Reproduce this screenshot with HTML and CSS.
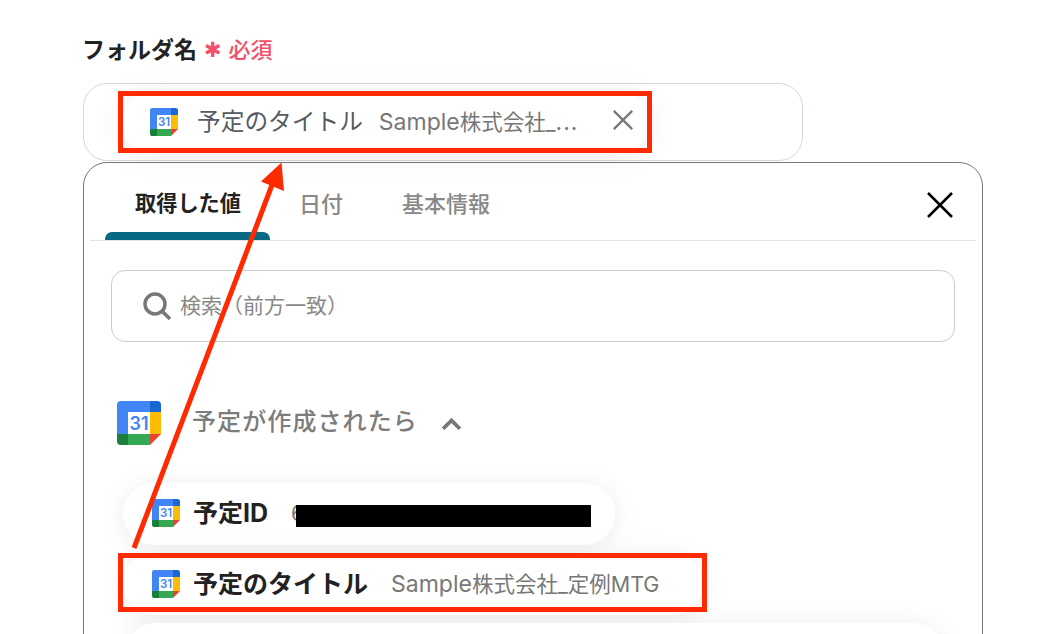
FILE: index.html
```html
<!DOCTYPE html>
<html lang="ja">
<head>
    <meta charset="UTF-8">
    <meta name="viewport" content="width=device-width, initial-scale=1.0">
    <title>フォルダ名</title>
    <link rel="stylesheet" href="styles.css">
</head>
<body>
    <svg class="defs">
        <symbol id="gcal" viewBox="0 0 44 44">
            <path fill="#4285f4" d="M4 0H33V11H11V33H0V4Q0 0 4 0Z"/>
            <path fill="#1967d2" d="M33 0H40Q44 0 44 4V11H33Z"/>
            <rect x="33" y="11" width="11" height="22" fill="#fbbc04"/>
            <rect x="11" y="33" width="22" height="11" fill="#34a853"/>
            <path fill="#188038" d="M0 33H11V44H4Q0 44 0 40Z"/>
            <path fill="#ea4335" d="M33 33H44L33 44Z"/>
            <rect x="11" y="11" width="22" height="22" fill="#fff"/>
            <text x="22" y="28.500" text-anchor="middle" class="gcal-num">31</text>
        </symbol>
    </svg>

    <div class="page">
        <div class="field-label">
            <span>フォルダ名</span>
            <span class="required"><span class="asterisk">✱</span>必須</span>
        </div>

        <div class="field-input">
            <div class="chip marked">
                <svg class="icon-sm"><use href="#gcal"/></svg>
                <span class="chip-name">予定のタイトル</span>
                <span class="chip-value"><span class="latin">Sample</span>株式会社_<span class="dots">...</span></span>
                <svg class="chip-close" viewBox="0 0 24 24"><path d="M2 2L22 22M22 2L2 22"/></svg>
            </div>
        </div>

        <div class="panel">
            <div class="tabs">
                <div class="tab active">取得した値</div>
                <div class="tab">日付</div>
                <div class="tab">基本情報</div>
                <svg class="panel-close" viewBox="0 0 26 26"><path d="M1 1L25 25M25 1L1 25"/></svg>
            </div>

            <div class="search">
                <svg class="search-icon" viewBox="0 0 28 28"><circle cx="12" cy="12" r="10"/><path d="M19.500 19.500L27 27"/></svg>
                <span class="search-text">検索（前方一致）</span>
            </div>

            <div class="section-head">
                <svg class="icon-lg"><use href="#gcal"/></svg>
                <span class="section-title">予定が作成されたら</span>
                <svg class="chevron" viewBox="0 0 20 12"><path d="M2 11L10 3L18 11"/></svg>
            </div>

            <div class="values">
                <div class="value-row first">
                    <svg class="icon-sm"><use href="#gcal"/></svg>
                    <span class="value-name">予定ID</span>
                    <span class="value-text">6</span>
                    <span class="redacted"></span>
                </div>
                <div class="value-row second marked">
                    <svg class="icon-sm"><use href="#gcal"/></svg>
                    <span class="value-name">予定のタイトル</span>
                    <span class="value-text"><span class="latin">Sample</span>株式会社_定例MTG</span>
                </div>
                <div class="value-row third"></div>
            </div>
        </div>
    </div>

    <!-- annotation arrow -->
    <svg class="arrow" viewBox="0 0 1056 634" width="1056" height="634">
        <path class="arrow-line" d="M134 548L272 185"/>
        <path class="arrow-head" d="M281.500 162.500L284 191L261 181.500Z"/>
    </svg>
</body>
</html>
```

FILE: styles.css
```css
* {
    box-sizing: border-box;
}

html, body {
    margin: 0;
    height: 634px;
    overflow: hidden;
    background: white;
}

body {
    font-family: "Inter", "Noto Sans CJK JP", sans-serif;
    color: #222;
    position: relative;
}

.defs {
    display: none;
}

.gcal-num {
    font-family: "Inter", sans-serif;
    font-size: 18px;
    font-weight: 600;
    fill: #4285f4;
}

.page {
    height: 634px;
    overflow: hidden;
    padding: 31px 0 0 83px;
    width: 1000px;
}

.field-label {
    display: flex;
    align-items: center;
    gap: 7px;
    height: 34px;
    margin-left: -1px;
    margin-bottom: 18px;
    font-size: 23px;
    font-weight: 700;
}

.required {
    display: flex;
    align-items: center;
    color: #f4506a;
    font-size: 22px;
    font-weight: 500;
}

.asterisk {
    font-family: "DejaVu Sans", sans-serif;
    font-size: 21px;
    line-height: 22px;
    margin-top: 4px;
    margin-right: 7px;
}

.field-input {
    width: 720px;
    height: 78px;
    border: 1px solid #d6d6de;
    border-radius: 24px;
    padding: 7px 0 0 37px;
}

.chip {
    position: relative;
    display: flex;
    align-items: center;
    width: 529px;
    height: 62px;
    padding-left: 29px;
    background: white;
    border-radius: 31px;
    box-shadow: 0 2px 30px rgba(0, 0, 0, 0.08);
}

/* red annotation box that sits over a row */
.marked::after {
    content: "";
    position: absolute;
    top: 0;
    left: -3px;
    right: -2px;
    bottom: 0;
    border: 5px solid #ff2a00;
}

.icon-sm {
    width: 28px;
    height: 28px;
    flex: none;
}

.icon-lg {
    width: 44px;
    height: 44px;
    flex: none;
}

.chip-name {
    margin-left: 19px;
    margin-bottom: 4px;
    font-size: 23.700px;
    color: #555b62;
}

.chip-value {
    margin-left: 16px;
    margin-bottom: 4px;
    font-size: 21.500px;
    color: #777;
}

.latin {
    font-size: 23px;
}

.dots {
    font-size: 23px;
    letter-spacing: 1px;
}

.chip-close {
    position: absolute;
    right: 16px;
    top: 18px;
    width: 22px;
    height: 22px;
    fill: none;
    stroke: #777;
    stroke-width: 2.500;
}

.panel {
    position: relative;
    width: 900px;
    height: 520px;
    margin-top: 1px;
    border: 1px solid #777;
    border-radius: 24px;
    padding: 0 6px;
}

.tabs {
    display: flex;
    align-items: center;
    height: 78px;
    border-bottom: 1px solid #e4e4e4;
}

.tab {
    position: relative;
    margin-left: 29px;
    font-size: 22px;
    font-weight: 500;
    color: #888;
}

.tab.active {
    width: 165px;
    margin-left: 15px;
    padding-left: 30px;
    font-weight: 700;
    color: #222;
    font-size: 21.200px;
}

.tab:not(.active) + .tab {
    margin-left: 59px;
}

.tab.active::after {
    content: "";
    position: absolute;
    left: 0;
    right: 0;
    bottom: -23px;
    height: 8px;
    background: #066a83;
    border-radius: 7px 7px 0 0;
}

.panel-close {
    width: 26px;
    height: 26px;
    margin-left: auto;
    margin-right: 23px;
    margin-top: 7px;
    fill: none;
    stroke: black;
    stroke-width: 2.500;
}

.search {
    display: flex;
    align-items: center;
    height: 72px;
    margin: 29px 21px 0;
    padding-left: 31px;
    border: 1px solid #ccc;
    border-radius: 14px;
    font-size: 21px;
    color: #888;
}

.search-icon {
    width: 28px;
    height: 28px;
    margin-right: 9px;
    fill: none;
    stroke: #777;
    stroke-width: 3.500;
}

.search-text {
    margin-bottom: 4px;
}

.section-head {
    display: flex;
    align-items: center;
    margin: 59px 0 0 27px;
    height: 44px;
}

.section-title {
    margin-left: 31px;
    margin-bottom: 8px;
    font-size: 24px;
    letter-spacing: 1.100px;
    font-weight: 500;
    color: #7c7c7c;
}

.chevron {
    width: 21px;
    height: 13px;
    margin-left: 23px;
    margin-top: 1px;
    fill: none;
    stroke: #777;
    stroke-width: 3.500;
}

.values {
    display: flex;
    flex-direction: column;
    align-items: flex-start;
    gap: 8px;
    margin-top: 38px;
}

.value-row {
    position: relative;
    display: flex;
    align-items: center;
    height: 62px;
    background: white;
    border-radius: 31px;
    box-shadow: 0 3px 26px rgba(0, 0, 0, 0.08);
}

.value-row.first {
    width: 492px;
    margin-left: 33px;
    padding: 0 0 2px 29px;
}

.value-row.second {
    width: 580px;
    margin-left: 33px;
    padding-left: 29px;
}

.value-row.second::after {
    left: -5px;
    right: -4px;
    bottom: 3px;
}

.value-row.third {
    width: 820px;
    margin-left: 35px;
}

.value-name {
    margin-left: 13px;
    margin-bottom: 4px;
    font-size: 25px;
    font-weight: 700;
}

.value-text {
    margin-left: 23px;
    margin-bottom: 4px;
    font-size: 21.500px;
    color: #777;
}

.first .value-text {
    margin-bottom: 0;
}

.redacted {
    width: 295px;
    height: 22px;
    margin-left: -8px;
    margin-top: 6px;
    background: black;
}

.arrow {
    position: absolute;
    left: 0;
    top: 0;
    pointer-events: none;
}

.arrow-line {
    stroke: #ff2a00;
    stroke-width: 5;
    fill: none;
}

.arrow-head {
    fill: #ff2a00;
}
```
